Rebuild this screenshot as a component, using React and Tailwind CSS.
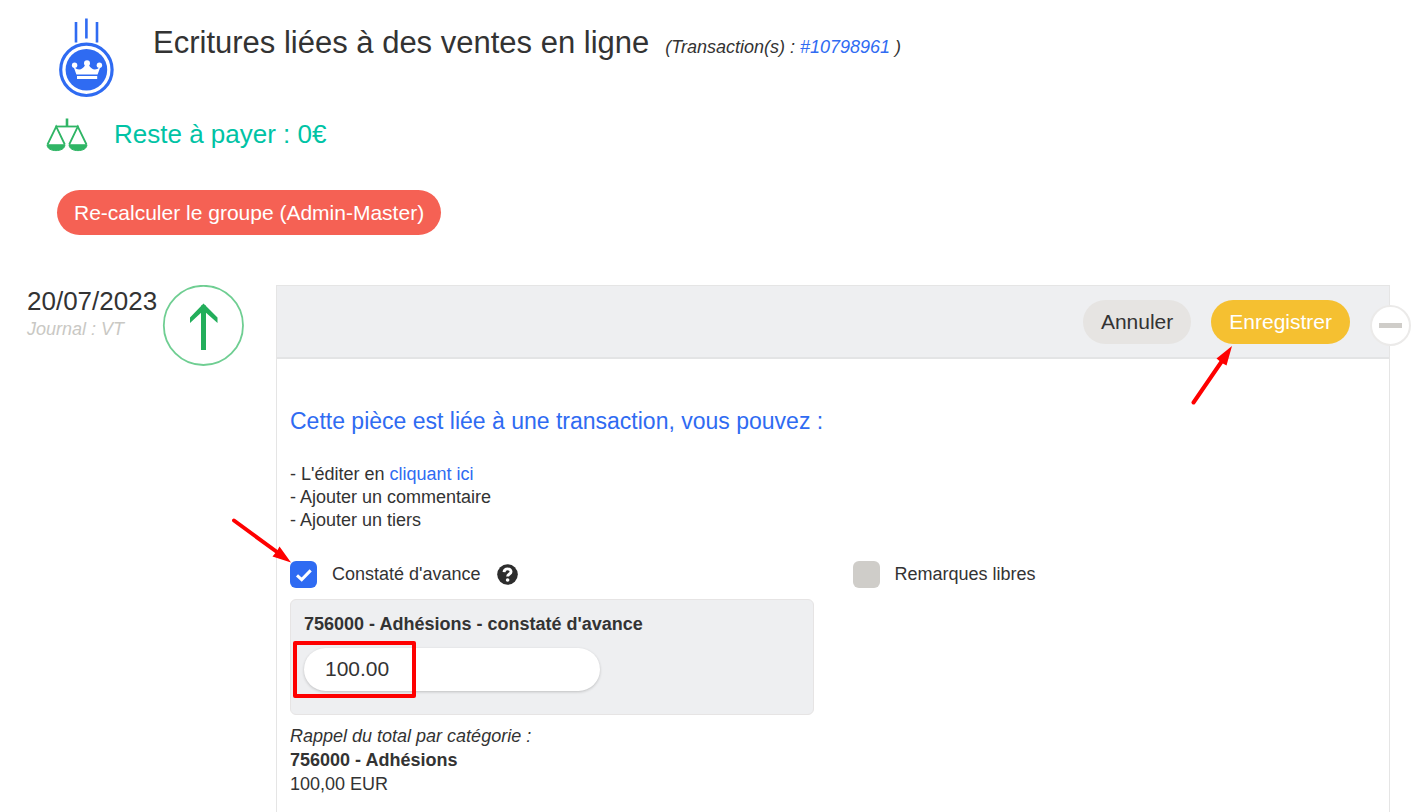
import { useState } from "react";

function CoinIcon() {
  return (
    <svg width="56" height="80" viewBox="0 0 56 80" className="shrink-0" aria-hidden="true">
      <g stroke="#2f6bf2" strokeWidth="2.6">
        <path d="M17 4v20.5M27.4 0.500v20M38 4v20.5" />
      </g>
      <circle cx="27.4" cy="51.800" r="25.7" fill="none" stroke="#2f6bf2" strokeWidth="3.2" />
      <circle cx="27.4" cy="51.800" r="20.8" fill="#2f6bf2" />
      <g fill="#fff">
        <circle cx="15.600" cy="47.2" r="2.700" />
        <circle cx="28" cy="45.2" r="3" />
        <circle cx="40.4" cy="47.2" r="2.700" />
        <path d="M14.4 48.2L17.400 56.6H38.6L41.6 48.2C38 52.400 33 53 29.8 47H26.2C23 53 18 52.400 14.4 48.2Z" />
        <rect x="18" y="58" width="20.2" height="3" />
      </g>
    </svg>
  );
}

function ScaleIcon() {
  return (
    <svg width="42" height="34" viewBox="0 0 42 34" className="shrink-0" aria-hidden="true">
      <g fill="none" stroke="#2fb565" strokeWidth="1.8">
        <path d="M9.5 8.5H32.5" />
        <path d="M1.5 26.5L10.2 8.5L18.8 26.5" />
        <path d="M23.2 26.5L31.8 8.5L40.5 26.5" />
      </g>
      <path d="M21 0.5V9" stroke="#2fb565" strokeWidth="2.6" />
      <path d="M1 26.8H19C18.6 31 14.5 32.6 10 32.6S1.4 31 1 26.8Z" fill="#2fb565" stroke="#2fb565" />
      <path d="M23 26.8H41C40.6 31 36.5 32.6 32 32.6S23.4 31 23 26.8Z" fill="#2fb565" stroke="#2fb565" />
    </svg>
  );
}

function UpArrowBadge() {
  return (
    <svg width="82" height="82" viewBox="0 0 82 82" className="shrink-0" aria-hidden="true">
      <circle cx="41.400" cy="40.400" r="39.6" fill="none" stroke="#6fce92" strokeWidth="1.8" />
      <path d="M41.500 20.5V65" fill="none" stroke="#23ae5b" strokeWidth="5" />
      <path d="M28 32.5V38L41.500 25.5L55.500 38V32.5L41.500 18.500Z" fill="#23ae5b" />
    </svg>
  );
}

function Option({ id, label, checked, onChange, children }) {
  return (
    <div className="flex h-7 items-center">
      <span className="relative flex">
        <input
          id={id}
          type="checkbox"
          checked={checked}
          onChange={onChange}
          className="size-[27px] appearance-none rounded-md bg-[#cfcdc9] checked:bg-[#2f6bf2]"
        />
        {checked && (
          <svg width="27" height="27" viewBox="0 0 27 27" className="pointer-events-none absolute inset-0" aria-hidden="true">
            <path d="M7 14.3L11.7 18.6L20.7 9.4" fill="none" stroke="#fff" strokeWidth="3" />
          </svg>
        )}
      </span>
      <label htmlFor={id} className="ml-[15px] text-lg">
        {label}
      </label>
      {children}
    </div>
  );
}

export default function App() {
  const [deferred, setDeferred] = useState(true);
  const [remarks, setRemarks] = useState(false);

  return (
    <div className="min-h-screen overflow-hidden bg-white font-['Liberation_Sans',Arial,sans-serif] text-[#333]">
      <header className="flex pt-[18px] pl-[59px]">
        <CoinIcon />
        <div className="flex flex-wrap items-baseline gap-x-4 pt-[5px] pl-[38px]">
          <h1 className="text-[31px] leading-10">Ecritures liées à des ventes en ligne</h1>
          <p className="text-lg italic">
            (Transaction(s) : <a href="#transaction" className="text-[#2f6bf2]">#10798961</a> )
          </p>
        </div>
      </header>

      <div className="mt-5 flex items-start gap-[26px] pl-[46px] text-[#00c3a5]">
        <ScaleIcon />
        <p className="text-[26px] leading-8">Reste à payer : 0€</p>
      </div>

      <button type="button" className="mt-[38px] ml-[57px] block h-[45px] rounded-full bg-[#f56154] px-[17px] text-[21px] leading-6 text-white">
        Re-calculer le groupe (Admin-Master)
      </button>

      <main className="mt-[50px] flex items-stretch pr-9 pl-[27px]">
        <div className="w-[135px] shrink-0">
          <p className="text-[26px] leading-8">20/07/2023</p>
          <p className="text-lg leading-6 text-[#c9c8c4] italic">Journal : VT</p>
        </div>
        <UpArrowBadge />

        <section className="ml-8 min-w-0 flex-1 border border-[#e5e5e5] pb-12">
          <div className="relative flex items-center justify-end gap-5 border-b-2 border-[#e3e4e5] bg-[#eeeff1] pt-[14px] pr-[39px] pb-[13px]">
            <button type="button" className="h-11 rounded-full bg-[#e6e4e2] px-[18px] text-[21px] leading-6">
              Annuler
            </button>
            <div className="relative flex">
              <button type="button" className="h-11 rounded-full bg-[#f5c031] px-[18px] text-[21px] leading-6 text-white">
                Enregistrer
              </button>
              <svg width="44" height="62" viewBox="0 0 44 62" className="pointer-events-none absolute top-11 -left-5 z-10" aria-hidden="true">
                <path d="M2.5 58.500L31 17" stroke="#fe0000" strokeWidth="4" strokeLinecap="round" />
                <path d="M41 2L35.500 21.500L31 19L25.500 14.500Z" fill="#fe0000" />
              </svg>
            </div>
            <button
              type="button"
              aria-label="Réduire"
              className="absolute top-[19px] -right-[22px] flex size-[41px] items-center justify-center rounded-full border-2 border-[#ebeae9] bg-white"
            >
              <span className="h-[5px] w-[23px] bg-[#cfcdc9]" />
            </button>
          </div>

          <div className="px-[13px] pt-12">
            <h2 className="text-[23px] leading-7 text-[#2f6bf2]">Cette pièce est liée à une transaction, vous pouvez :</h2>

            <ul className="mt-7 text-lg leading-[23px]">
              <li>
                - L'éditer en <a href="#edit" className="text-[#2f6bf2]">cliquant ici</a>
              </li>
              <li>- Ajouter un commentaire</li>
              <li>- Ajouter un tiers</li>
            </ul>

            <div className="mt-7 grid grid-cols-2 gap-x-[39px]">
              <div className="relative">
                <Option id="deferred" label="Constaté d'avance" checked={deferred} onChange={() => setDeferred(!deferred)}>
                  <button type="button" aria-label="Aide" className="ml-4 flex">
                    <svg width="21" height="21" viewBox="0 0 21 21" aria-hidden="true">
                      <circle cx="10.500" cy="10.500" r="10.300" fill="#2d2d2d" />
                      <path d="M7 8.100C7.400 3.600 14.200 4 14 7.800C13.900 10 10.600 10 10.600 12.600" fill="none" stroke="#fff" strokeWidth="2.900" />
                      <circle cx="10.600" cy="16" r="1.800" fill="#fff" />
                    </svg>
                  </button>
                </Option>
                <svg width="62" height="48" viewBox="0 0 62 48" className="pointer-events-none absolute -top-[43px] -left-[59px]" aria-hidden="true">
                  <path d="M3 3.500L46 35" stroke="#fe0000" strokeWidth="4" strokeLinecap="round" />
                  <path d="M60 45.500L48.500 29.500L46 34L41.500 39.500Z" fill="#fe0000" />
                </svg>

                <div className="mt-[11px] rounded-md border border-[#e6e4e4] bg-[#eeeff1] px-[13px] pt-3 pb-[23px]">
                  <label htmlFor="amount" className="block text-lg leading-6 font-bold">
                    756000 - Adhésions - constaté d'avance
                  </label>
                  <div className="relative mt-3">
                    <input
                      id="amount"
                      type="text"
                      defaultValue="100.00"
                      className="block h-[43px] w-[296px] max-w-full rounded-full bg-white px-[21px] pb-0.5 text-[21px] shadow-[0_1px_3px_rgba(0,0,0,0.2)] outline-none"
                    />
                    <span className="pointer-events-none absolute -top-[7px] -left-[11px] h-[57px] w-[123px] rounded-xs border-4 border-[#fe0000]" />
                  </div>
                </div>

                <div className="mt-[9px] text-lg leading-6">
                  <p className="italic">Rappel du total par catégorie :</p>
                  <p className="font-bold">756000 - Adhésions</p>
                  <p>100,00 EUR</p>
                </div>
              </div>

              <Option id="remarks" label="Remarques libres" checked={remarks} onChange={() => setRemarks(!remarks)} />
            </div>
          </div>
        </section>
      </main>
    </div>
  );
}
